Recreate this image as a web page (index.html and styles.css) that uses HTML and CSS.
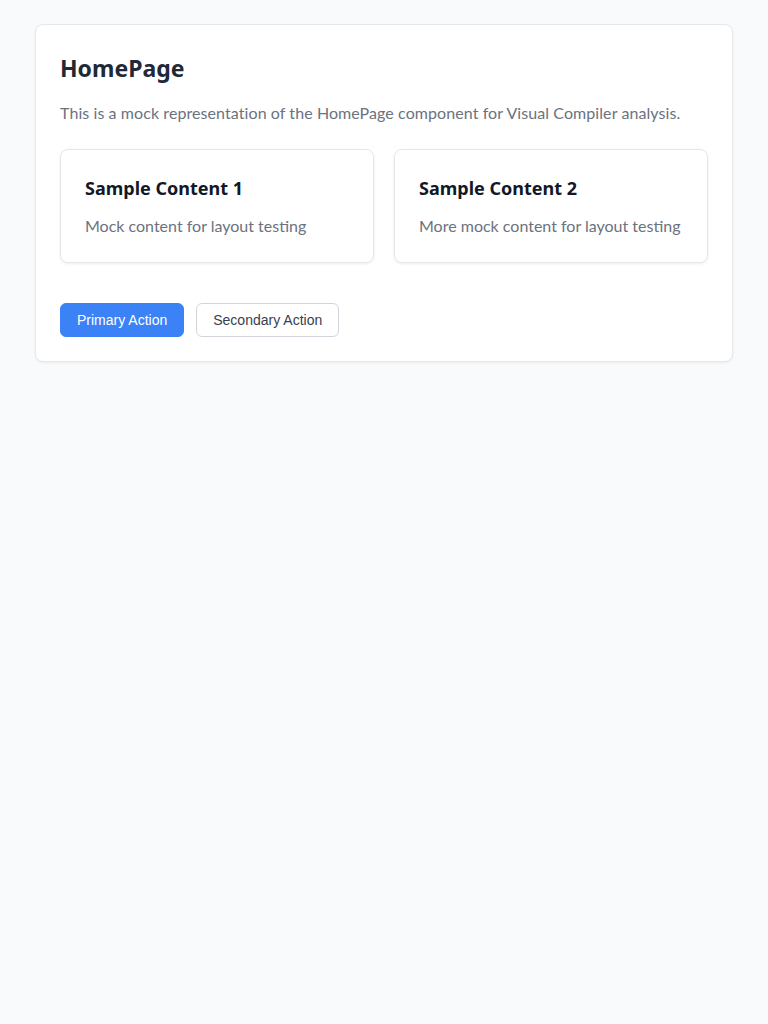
FILE: index.html
```html
<!DOCTYPE html>
<html lang="en">
<head>
<meta charset="utf-8">
<title>HomePage</title>
<link rel="stylesheet" href="styles.css">
</head>
<body>
<main class="page">
  <section class="panel">
    <h1 class="title">HomePage</h1>
    <p class="lead">This is a mock representation of the HomePage component for Visual Compiler analysis.</p>
    <div class="grid">
      <div class="card">
        <h2 class="card-title">Sample Content 1</h2>
        <p class="card-text">Mock content for layout testing</p>
      </div>
      <div class="card">
        <h2 class="card-title">Sample Content 2</h2>
        <p class="card-text">More mock content for layout testing</p>
      </div>
    </div>
    <div class="actions">
      <button class="btn btn-primary">Primary Action</button>
      <button class="btn btn-secondary">Secondary Action</button>
    </div>
  </section>
</main>
</body>
</html>
```

FILE: styles.css
```css
* { box-sizing: border-box; }
html, body { margin: 0; padding: 0; }
body {
  background: #f9fafb;
  font-family: Lato, "Noto Sans", sans-serif;
  color: #1f2937;
}
.page {
  padding: 24px 35px;
}
.panel {
  background: #fff;
  border: 1px solid #e5e7eb;
  border-radius: 8px;
  box-shadow: 0 1px 3px rgba(0,0,0,0.06);
  padding: 24px;
}
.title {
  margin: 1px 0 15px;
  font-family: "Noto Sans", sans-serif;
  font-size: 23px;
  line-height: 36px;
  font-weight: 700;
  color: #1f2937;
}
.lead {
  margin: 0 0 24px;
  font-size: 16px;
  line-height: 24px;
  letter-spacing: 0.08px;
  color: #6b7280;
}
.grid {
  display: grid;
  grid-template-columns: 1fr 1fr;
  gap: 20px;
  margin-bottom: 40px;
}
.card {
  border: 1px solid #e5e7eb;
  border-radius: 8px;
  box-shadow: 0 1px 3px rgba(0,0,0,0.08);
  padding: 25px 24px 24px;
}
.card-title {
  margin: 0 0 12px;
  font-family: "Noto Sans", sans-serif;
  font-size: 18px;
  line-height: 27px;
  font-weight: 700;
  color: #111827;
}
.card-text {
  margin: 0;
  font-size: 16px;
  line-height: 24px;
  color: #6b7280;
}
.actions {
  display: flex;
  gap: 12px;
}
.btn {
  font-family: "Liberation Sans", Arial, sans-serif;
  font-size: 14px;
  line-height: 16px;
  padding: 8px 16px;
  border-radius: 6px;
  cursor: pointer;
}
.btn-primary {
  background: #3b82f6;
  border: 1px solid #3b82f6;
  color: #fff;
}
.btn-secondary {
  background: #fff;
  border: 1px solid #d1d5db;
  color: #374151;
}
```
